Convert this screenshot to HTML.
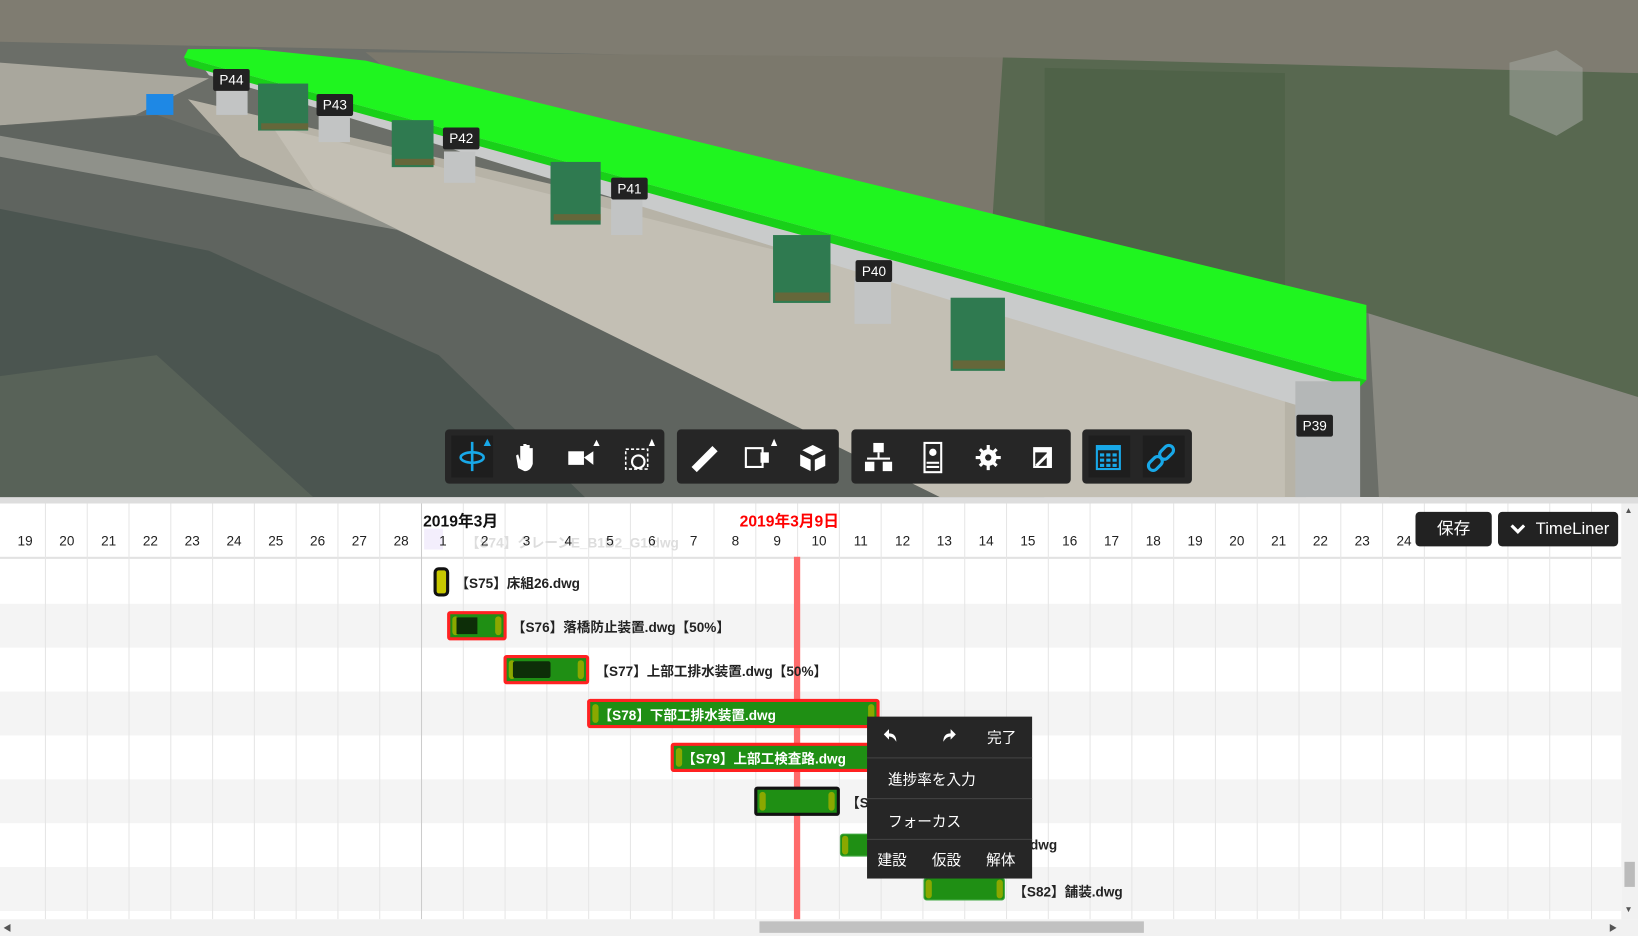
<!DOCTYPE html>
<html><head><meta charset="utf-8"><style>
html,body{margin:0;padding:0;width:1638px;height:936px;overflow:hidden;background:#fff}
#s{position:absolute;left:0;top:0;width:1568px;height:896px;transform:scale(1.04464);transform-origin:0 0;font-family:"Liberation Sans","Noto Sans CJK JP",sans-serif}
.a{position:absolute}
.lbl{position:absolute;background:#222;color:#fff;font-size:13px;padding:3px 6px;border-radius:2px}
.tb{position:absolute;top:411px;height:52px;background:#262626;border-radius:4px}
.ic{position:absolute;top:6px;width:40px;height:40px}
.day{position:absolute;top:510px;width:40px;text-align:center;font-size:13px;color:#222}
.row{position:absolute;left:0;width:1552px;height:42px}
.bar{position:absolute;box-sizing:border-box;background:#1f8f14;border-radius:3px}
.tx{position:absolute;font-size:13px;font-weight:bold;color:#222;white-space:nowrap}
.cm{position:absolute;left:830px;top:686px;width:158px;height:155px;background:#262626;color:#fff;font-size:14px}
.cm div{position:absolute}
</style></head><body><div id="s">
<!-- 3D view -->
<svg class="a" style="left:0;top:0" width="1568" height="476">
<rect width="1568" height="476" fill="#6b6e68"/>
<polygon points="0,0 1568,0 1568,80 960,60 500,50 0,40" fill="#7f7c71"/>
<polygon points="350,50 960,55 960,220 700,170 400,90" fill="#7b786c"/>
<polygon points="960,55 1568,70 1568,476 1330,476 1310,300 950,210" fill="#586850"/>
<polygon points="1000,65 1230,70 1230,330 1000,240" fill="#4f6248"/>
<polygon points="1310,300 1568,380 1568,476 1320,476" fill="#8a8a82"/>
<polygon points="0,60 200,75 130,110 0,120" fill="#a9a79d"/>
<polygon points="0,120 150,110 560,250 900,400 1000,476 0,476" fill="#5f645f"/>
<polygon points="0,200 200,240 420,340 560,476 0,476" fill="#4b5550"/>
<polygon points="0,360 150,340 300,476 0,476" fill="#586258"/>
<polygon points="0,130 400,200 900,420 880,440 380,220 0,150" fill="#8f918a"/>
<polygon points="180,95 1250,345 1250,476 1000,476 600,320 230,150" fill="#b7b3a7"/>
<polygon points="260,120 1230,360 1230,476 900,476 300,180" fill="#c3bfb4"/>
<polygon points="190,58 1300,345 1300,380 1255,392 200,72" fill="#c9cbcb"/>
<polygon points="180,47 245,47 350,58 1308,292 1308,364 176,55" fill="#1ff51f"/>
<polygon points="176,55 1308,364 1300,372 180,63" fill="#19d019"/>
<rect x="1240" y="365" width="62" height="111" fill="#b4b7b7"/>
<rect x="140" y="90" width="26" height="20" fill="#1e88e5"/>
<g fill="#2f7a50"><rect x="247" y="80" width="48" height="45"/><rect x="375" y="115" width="40" height="45"/><rect x="527" y="155" width="48" height="60"/><rect x="740" y="225" width="55" height="65"/><rect x="910" y="285" width="52" height="70"/></g>
<g fill="#8b5a2b" opacity=".6"><rect x="250" y="118" width="45" height="6"/><rect x="378" y="152" width="38" height="6"/><rect x="530" y="205" width="45" height="6"/><rect x="742" y="280" width="52" height="8"/><rect x="912" y="345" width="50" height="8"/></g>
<g fill="#c2c4c4"><rect x="207" y="85" width="30" height="25"/><rect x="305" y="108" width="30" height="28"/><rect x="425" y="145" width="30" height="30"/><rect x="585" y="190" width="30" height="35"/><rect x="818" y="265" width="35" height="45"/></g>
<polygon points="1445,60 1490,48 1515,65 1515,115 1490,130 1445,110" fill="#9fa39b" opacity=".6"/>
</svg>
<div class="lbl" style="left:204px;top:66px">P44</div>
<div class="lbl" style="left:303px;top:90px">P43</div>
<div class="lbl" style="left:424px;top:122px">P42</div>
<div class="lbl" style="left:585px;top:170px">P41</div>
<div class="lbl" style="left:819px;top:249px">P40</div>
<div class="lbl" style="left:1241px;top:397px">P39</div>
<!-- toolbar -->
<div class="tb" style="left:426px;width:210px">
 <div class="ic" style="left:6px;background:#1e1e1e"></div>
 <svg class="a" style="left:0;top:0" width="210" height="52" fill="#fff" stroke="#fff">
  <g stroke="#18a8e8" fill="none" stroke-width="2.5"><ellipse cx="26" cy="27" rx="11" ry="5"/><line x1="26" y1="12" x2="26" y2="40"/></g>
  <polygon points="37,16 44,16 40.5,9" fill="#18a8e8" stroke="none"/>
  <path d="M70 37 L68 25 L70 24 L72 30 L72 16 L75 16 L75 28 L75 14 L78 14 L78 28 L78 15 L81 15 L81 29 L81 18 L84 18 L84 33 Q82 40 76 40 Z" stroke="none"/>
  <rect x="118" y="21" width="15" height="13" stroke="none"/><polygon points="133,27 142,21 142,34" stroke="none"/><polygon points="142,16 148,16 145,10" stroke="none"/>
  <rect x="173" y="19" width="21" height="19" fill="none" stroke-dasharray="3 2" stroke-width="1.5"/><circle cx="185" cy="31" r="6" fill="none" stroke-width="2"/><polygon points="195,16 201,16 198,9" stroke="none"/>
 </svg>
</div>
<div class="tb" style="left:648px;width:155px">
 <svg class="a" width="155" height="52" fill="#fff">
  <polygon points="14,36 34,16 39,21 19,41"/>
  <rect x="66" y="18" width="16" height="18" fill="none" stroke="#fff" stroke-width="2"/><rect x="80" y="22" width="8" height="10"/><polygon points="90,16 96,16 93,9"/>
  <polygon points="130,15 140,20 130,25 120,20"/><polygon points="118,24 128,29 128,40 118,35"/><polygon points="142,24 132,29 132,40 142,35"/>
 </svg>
</div>
<div class="tb" style="left:815px;width:210px">
 <svg class="a" width="210" height="52" fill="#fff">
  <rect x="21" y="13" width="10" height="9"/><rect x="25" y="22" width="2" height="6"/><rect x="15" y="27" width="22" height="2"/><rect x="13" y="31" width="9" height="9"/><rect x="30" y="31" width="9" height="9"/>
  <rect x="70" y="13" width="16" height="28" fill="none" stroke="#fff" stroke-width="2"/><circle cx="78" cy="22" r="3.5"/><rect x="72" y="31" width="12" height="2"/><rect x="72" y="35" width="12" height="2"/>
  <circle cx="131" cy="27" r="8"/>
  <g stroke="#fff" stroke-width="3"><line x1="131" y1="15" x2="131" y2="39"/><line x1="119" y1="27" x2="143" y2="27"/><line x1="123" y1="19" x2="139" y2="35"/><line x1="139" y1="19" x2="123" y2="35"/></g>
  <circle cx="131" cy="27" r="3" fill="#262626"/>
  <rect x="175" y="18" width="16" height="18" fill="none" stroke="#fff" stroke-width="2"/><polygon points="175,18 191,18 191,36 187,36 187,22 175,22"/><polygon points="176,34 178,36 190,24 188,22"/>
 </svg>
</div>
<div class="tb" style="left:1036px;width:105px">
 <div class="ic" style="left:6px;background:#1e1e1e"></div><div class="ic" style="left:58px;background:#1e1e1e"></div>
 <svg class="a" width="105" height="52">
  <rect x="14" y="16" width="22" height="22" fill="none" stroke="#18a8e8" stroke-width="2"/><rect x="14" y="16" width="22" height="4" fill="#18a8e8"/>
  <g fill="#18a8e8"><rect x="17" y="23" width="4" height="3"/><rect x="23" y="23" width="4" height="3"/><rect x="29" y="23" width="4" height="3"/><rect x="17" y="28" width="4" height="3"/><rect x="23" y="28" width="4" height="3"/><rect x="29" y="28" width="4" height="3"/><rect x="17" y="33" width="4" height="3"/><rect x="23" y="33" width="4" height="3"/><rect x="29" y="33" width="4" height="3"/></g>
  <g fill="none" stroke="#18a8e8" stroke-width="3"><rect x="66" y="25" width="9" height="15" rx="4.5" transform="rotate(45 70 32)"/><rect x="76" y="14" width="9" height="15" rx="4.5" transform="rotate(45 80 22)"/></g>
 </svg>
</div>
<!-- gantt -->
<div class="a" style="left:0;top:476px;width:1568px;height:6px;background:#ddd"></div>
<div class="a" style="left:0;top:482px;width:1552px;height:398px;background:#fff"></div>
<div class="row" style="top:578px;background:#f4f4f4"></div>
<div class="row" style="top:662px;background:#f4f4f4"></div>
<div class="row" style="top:746px;background:#f4f4f4"></div>
<div class="row" style="top:830px;background:#f4f4f4"></div>
<div class="a" style="left:0;top:533px;width:1552px;height:2px;background:#e2e2e2"></div>
<svg class="a" style="left:0;top:482px" width="1552" height="398">
<g stroke="#e6e6e6" stroke-width="1">
<line x1="43.5" y1="0" x2="43.5" y2="398"/><line x1="83.5" y1="0" x2="83.5" y2="398"/><line x1="123.5" y1="0" x2="123.5" y2="398"/><line x1="163.5" y1="0" x2="163.5" y2="398"/><line x1="203.5" y1="0" x2="203.5" y2="398"/><line x1="243.5" y1="0" x2="243.5" y2="398"/><line x1="283.5" y1="0" x2="283.5" y2="398"/><line x1="323.5" y1="0" x2="323.5" y2="398"/><line x1="363.5" y1="0" x2="363.5" y2="398"/><line x1="443.5" y1="0" x2="443.5" y2="398"/><line x1="483.5" y1="0" x2="483.5" y2="398"/><line x1="523.5" y1="0" x2="523.5" y2="398"/><line x1="563.5" y1="0" x2="563.5" y2="398"/><line x1="603.5" y1="0" x2="603.5" y2="398"/><line x1="643.5" y1="0" x2="643.5" y2="398"/><line x1="683.5" y1="0" x2="683.5" y2="398"/><line x1="723.5" y1="0" x2="723.5" y2="398"/><line x1="803.5" y1="0" x2="803.5" y2="398"/><line x1="843.5" y1="0" x2="843.5" y2="398"/><line x1="883.5" y1="0" x2="883.5" y2="398"/><line x1="923.5" y1="0" x2="923.5" y2="398"/><line x1="963.5" y1="0" x2="963.5" y2="398"/><line x1="1003.5" y1="0" x2="1003.5" y2="398"/><line x1="1043.5" y1="0" x2="1043.5" y2="398"/><line x1="1083.5" y1="0" x2="1083.5" y2="398"/><line x1="1123.5" y1="0" x2="1123.5" y2="398"/><line x1="1163.5" y1="0" x2="1163.5" y2="398"/><line x1="1203.5" y1="0" x2="1203.5" y2="398"/><line x1="1243.5" y1="0" x2="1243.5" y2="398"/><line x1="1283.5" y1="0" x2="1283.5" y2="398"/><line x1="1323.5" y1="0" x2="1323.5" y2="398"/><line x1="1363.5" y1="0" x2="1363.5" y2="398"/><line x1="1403.5" y1="0" x2="1403.5" y2="398"/><line x1="1443.5" y1="0" x2="1443.5" y2="398"/><line x1="1483.5" y1="0" x2="1483.5" y2="398"/><line x1="1523.5" y1="0" x2="1523.5" y2="398"/></g>
<line x1="403.5" y1="0" x2="403.5" y2="398" stroke="#ccc"/><line x1="763.5" y1="0" x2="763.5" y2="398" stroke="#e6e6e6"/>
</svg>
<div class="a" style="left:405px;top:488px;font-size:15px;font-weight:bold;color:#111">2019年3月</div>
<div class="a" style="left:708px;top:488px;font-size:15px;font-weight:bold;color:#f00">2019年3月9日</div>
<div class="a" style="left:446px;top:509px;font-size:13px;color:#ddd;font-weight:bold">【S74】クレーンE_B1B2_G1.dwg</div>
<div class="a" style="left:406px;top:506px;width:18px;height:20px;background:#f3eefc"></div>
<div class="day" style="left:4px">19</div><div class="day" style="left:44px">20</div><div class="day" style="left:84px">21</div><div class="day" style="left:124px">22</div><div class="day" style="left:164px">23</div><div class="day" style="left:204px">24</div><div class="day" style="left:244px">25</div><div class="day" style="left:284px">26</div><div class="day" style="left:324px">27</div><div class="day" style="left:364px">28</div><div class="day" style="left:404px">1</div><div class="day" style="left:444px">2</div><div class="day" style="left:484px">3</div><div class="day" style="left:524px">4</div><div class="day" style="left:564px">5</div><div class="day" style="left:604px">6</div><div class="day" style="left:644px">7</div><div class="day" style="left:684px">8</div><div class="day" style="left:724px">9</div><div class="day" style="left:764px">10</div><div class="day" style="left:804px">11</div><div class="day" style="left:844px">12</div><div class="day" style="left:884px">13</div><div class="day" style="left:924px">14</div><div class="day" style="left:964px">15</div><div class="day" style="left:1004px">16</div><div class="day" style="left:1044px">17</div><div class="day" style="left:1084px">18</div><div class="day" style="left:1124px">19</div><div class="day" style="left:1164px">20</div><div class="day" style="left:1204px">21</div><div class="day" style="left:1244px">22</div><div class="day" style="left:1284px">23</div><div class="day" style="left:1324px">24</div>
<div class="a" style="left:760px;top:533px;width:6px;height:347px;background:#ff6b6b"></div>
<!-- bars -->
<div class="bar" style="left:415px;top:543px;width:15px;height:28px;background:#c8c800;border:3px solid #111;border-radius:5px"></div>
<div class="tx" style="left:436px;top:548px">【S75】床組26.dwg</div>
<div class="bar" style="left:428px;top:585px;width:57px;height:28px;border:3px solid #f22"><div class="a" style="left:2px;top:2px;width:6px;height:18px;background:#8aa800;border-radius:3px"></div><div class="a" style="left:6px;top:3px;width:20px;height:16px;background:#0d2e08"></div><div class="a" style="right:2px;top:2px;width:6px;height:18px;background:#8aa800;border-radius:3px"></div></div>
<div class="tx" style="left:490px;top:590px">【S76】落橋防止装置.dwg【50%】</div>
<div class="bar" style="left:482px;top:627px;width:82px;height:28px;border:3px solid #f22"><div class="a" style="left:2px;top:2px;width:6px;height:18px;background:#8aa800;border-radius:3px"></div><div class="a" style="left:6px;top:3px;width:36px;height:16px;background:#0d2e08;border-radius:2px"></div><div class="a" style="right:2px;top:2px;width:6px;height:18px;background:#8aa800;border-radius:3px"></div></div>
<div class="tx" style="left:570px;top:632px">【S77】上部工排水装置.dwg【50%】</div>
<div class="bar" style="left:562px;top:669px;width:280px;height:28px;border:3px solid #f22"><div class="a" style="left:2px;top:2px;width:6px;height:18px;background:#8aa800;border-radius:3px"></div><div class="a" style="right:2px;top:2px;width:6px;height:18px;background:#8aa800;border-radius:3px"></div><div class="tx" style="left:8px;top:2px;color:#fff">【S78】下部工排水装置.dwg</div></div>
<div class="bar" style="left:642px;top:711px;width:200px;height:28px;border:3px solid #f22"><div class="a" style="left:2px;top:2px;width:6px;height:18px;background:#8aa800;border-radius:3px"></div><div class="tx" style="left:8px;top:2px;color:#fff">【S79】上部工検査路.dwg</div></div>
<div class="bar" style="left:722px;top:753px;width:82px;height:28px;border:3px solid #111"><div class="a" style="left:2px;top:2px;width:6px;height:18px;background:#8aa800;border-radius:3px"></div><div class="a" style="right:2px;top:2px;width:6px;height:18px;background:#8aa800;border-radius:3px"></div></div>
<div class="tx" style="left:810px;top:758px">【S</div>
<div class="bar" style="left:804px;top:798px;width:30px;height:22px;border:1px solid #4a4"><div class="a" style="left:1px;top:1px;width:6px;height:18px;background:#8aa800;border-radius:3px"></div></div>
<div class="tx" style="left:986px;top:801px">dwg</div>
<div class="bar" style="left:884px;top:840px;width:78px;height:22px;border:1px solid #4a4"><div class="a" style="left:1px;top:1px;width:6px;height:18px;background:#8aa800;border-radius:3px"></div><div class="a" style="right:1px;top:1px;width:6px;height:18px;background:#8aa800;border-radius:3px"></div></div>
<div class="tx" style="left:970px;top:843px">【S82】舗装.dwg</div>
<!-- context menu -->
<div class="cm">
 <svg class="a" style="left:16px;top:10px" width="16" height="16"><path d="M12 14 Q12 6 5 6 L5 2 L0 7 L5 12 L5 9 Q9 9 12 14Z" fill="#fff"/></svg>
 <svg class="a" style="left:70px;top:10px" width="16" height="16"><path d="M3 14 Q3 6 10 6 L10 2 L15 7 L10 12 L10 9 Q6 9 3 14Z" fill="#fff"/></svg>
 <div style="left:115px;top:10px">完了</div>
 <div style="left:0;top:39px;width:158px;height:1px;background:#444"></div>
 <div style="left:20px;top:50px">進捗率を入力</div>
 <div style="left:0;top:78px;width:158px;height:1px;background:#444"></div>
 <div style="left:20px;top:90px">フォーカス</div>
 <div style="left:0;top:117px;width:158px;height:1px;background:#444"></div>
 <div style="left:10px;top:127px">建設</div><div style="left:62px;top:127px">仮設</div><div style="left:114px;top:127px">解体</div>
</div>
<!-- buttons -->
<div class="a" style="left:1355px;top:490px;width:73px;height:33px;background:#222;border-radius:4px;color:#fff;font-size:16px;text-align:center;line-height:33px">保存</div>
<div class="a" style="left:1434px;top:490px;width:115px;height:33px;background:#222;border-radius:4px;color:#fff;font-size:16px;line-height:33px"><svg class="a" style="left:12px;top:12px" width="14" height="10"><path d="M1 1 L7 7 L13 1" stroke="#fff" stroke-width="3" fill="none"/></svg><span style="position:absolute;left:36px">TimeLiner</span></div>
<!-- scrollbars -->
<div class="a" style="left:1552px;top:482px;width:16px;height:398px;background:#f1f1f1"></div>
<div class="a" style="left:1555px;top:825px;width:10px;height:24px;background:#bbb"></div>
<div class="a" style="left:0;top:880px;width:1568px;height:16px;background:#f1f1f1"></div>
<div class="a" style="left:727px;top:882px;width:368px;height:11px;background:#c1c1c1"></div>
<div class="a" style="left:1555px;top:484px;font-size:8px;color:#555">▲</div>
<div class="a" style="left:1555px;top:866px;font-size:8px;color:#555">▼</div>
<div class="a" style="left:3px;top:883px;font-size:8px;color:#555">◀</div>
<div class="a" style="left:1540px;top:883px;font-size:8px;color:#555">▶</div>
</div></body></html>
